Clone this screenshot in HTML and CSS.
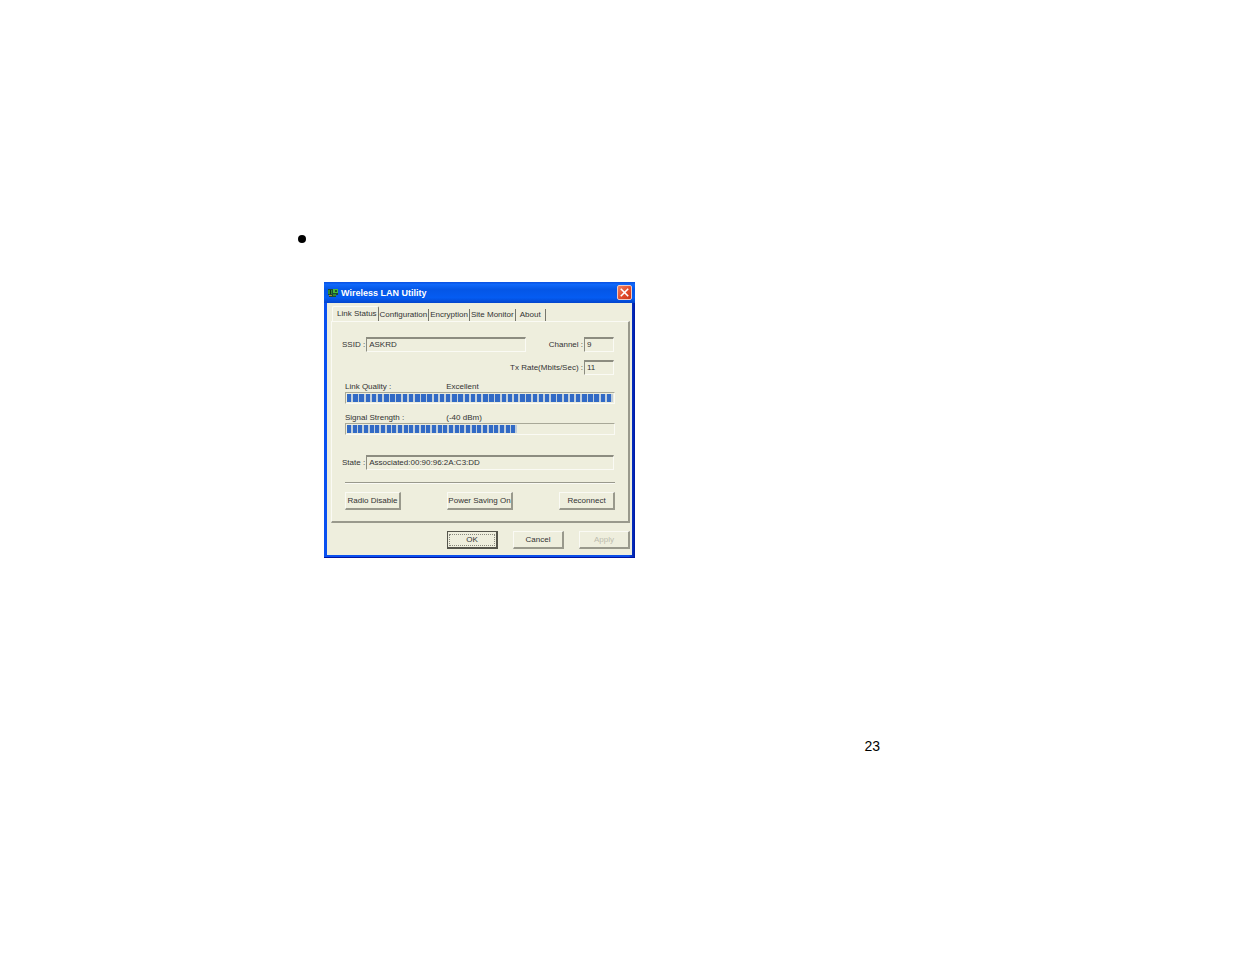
FILE: index.html
```html
<!DOCTYPE html>
<html lang="en">
<head>
<meta charset="utf-8">
<title>Wireless LAN Utility</title>
<link rel="stylesheet" href="styles.css">
</head>
<body>
<main class="page">
  <ul class="bullets"><li class="bullet"></li></ul>
  <section class="dialog" aria-label="Wireless LAN Utility">
    <header class="titlebar">
      <svg class="app-icon" viewBox="0 0 12 10" aria-hidden="true">
        <path d="M1 1h10v6H9v2H2V7H1z" fill="#1d4a34"/>
        <path d="M1 2h4v4H1z" fill="#2f8a35"/>
        <path d="M6 1h5v4H6z" fill="#46b83c"/>
        <path d="M3 2h1v4H3z" fill="#123020"/>
        <path d="M8 2h2v2H8z" fill="#1a5a2a"/>
        <path d="M2 7h3v1H2z" fill="#a8863c"/>
        <path d="M6 6h3v2H6z" fill="#2f8a35"/>
      </svg>
      <h1 class="title">Wireless LAN Utility</h1>
      <button class="close" aria-label="Close">
        <svg viewBox="0 0 14 14" aria-hidden="true"><path d="M3 3l8 8M11 3l-8 8" stroke="#fff" stroke-width="1.7" fill="none"/></svg>
      </button>
    </header>
    <div class="client">
      <nav class="tabs" role="tablist">
        <button class="tab active" role="tab" aria-selected="true">Link Status</button>
        <button class="tab" role="tab">Configuration</button>
        <button class="tab" role="tab">Encryption</button>
        <button class="tab" role="tab">Site Monitor</button>
        <button class="tab" role="tab">About</button>
      </nav>
      <div class="panel">
        <div class="row">
          <label class="lead" for="ssid">SSID :</label>
          <input class="field ssid" id="ssid" value="ASKRD" readonly>
          <label class="push" for="channel">Channel :</label>
          <input class="field short" id="channel" value="9" readonly>
        </div>
        <div class="row rate">
          <label class="push" for="rate">Tx Rate(Mbits/Sec) :</label>
          <input class="field short" id="rate" value="11" readonly>
        </div>
        <div class="meter">
          <div class="meter-head"><span>Link Quality :</span><span>Excellent</span></div>
          <div class="track" role="progressbar" aria-label="Link Quality" aria-valuenow="100"><div class="fill" style="width:100%;--blocks:43"></div></div>
        </div>
        <div class="meter">
          <div class="meter-head"><span>Signal Strength :</span><span>(-40 dBm)</span></div>
          <div class="track" role="progressbar" aria-label="Signal Strength" aria-valuenow="64"><div class="fill" style="width:64%;--blocks:30"></div></div>
        </div>
        <div class="row state">
          <label class="lead" for="state">State :</label>
          <input class="field wide" id="state" value="Associated:00:90:96:2A:C3:DD" readonly>
        </div>
        <hr class="rule">
        <div class="actions">
          <button class="btn">Radio Disable</button>
          <button class="btn large">Power Saving On</button>
          <button class="btn">Reconnect</button>
        </div>
      </div>
      <footer class="footer">
        <button class="btn default"><span class="focus">OK</span></button>
        <button class="btn">Cancel</button>
        <button class="btn" disabled>Apply</button>
      </footer>
    </div>
  </section>
  <p class="page-number">23</p>
</main>
</body>
</html>
```
FILE: styles.css
```css
* { box-sizing: border-box; }
body { margin: 0; background: #fff; color: #000; font-family: "Liberation Sans", Arial, sans-serif; }
.page { padding: 235px 355px 0 298px; }
.bullets { margin: 0; padding: 0; list-style: none; }
.bullet { width: 8px; height: 8px; border-radius: 50%; background: #000; }

.dialog {
  width: 53%;
  min-width: 311px;
  margin: 39px 0 0 26px;
  padding: 0 3px 2px;
  background: linear-gradient(90deg, #0a50f0, #0a4ee8 98%, #0018a0 100%);
  border-bottom: 1px solid #0014a0;
  font-size: 8px;
  line-height: 10px;
  color: #333;
}
.titlebar {
  display: flex;
  align-items: center;
  height: 21px;
  margin: 0 -3px;
  padding: 0 3px;
  background: linear-gradient(#0a50e0, #0f68fa 12%, #0556e6 35%, #055cf2 75%, #0345cc);
}
.app-icon { width: 12px; height: 10px; }
.title { flex: 1; margin: 0 0 0 2px; font-size: 9px; line-height: 12px; font-weight: bold; color: #fff; }
.close {
  width: 15px;
  height: 15px;
  padding: 0;
  border: 1px solid #f0c8c0;
  border-radius: 2px;
  background: linear-gradient(135deg, #f08060, #e04828 60%, #c83818);
}
.close svg { display: block; width: 13px; height: 13px; }

.client { padding: 3px 2px 6px 4px; background: #eeeedd; }
.tabs { display: flex; align-items: flex-end; height: 15px; padding-left: 1px; }
.tab {
  height: 12px;
  min-width: 30px;
  padding: 0 1px;
  border: 0;
  border-right: 1px solid #77776c;
  background: none;
  font: inherit;
  color: inherit;
  white-space: nowrap;
}
.tab.active {
  height: 15px;
  padding: 0 1px 1px 4px;
  border-top: 1px solid #fafaf4;
  border-left: 1px solid #fafaf4;
  border-radius: 2px 2px 0 0;
}
.panel {
  padding: 15px 13px 11px;
  border: 1px solid #fafaf4;
  border-right: 2px solid #99998c;
  border-bottom: 2px solid #99998c;
}
.row { display: flex; align-items: center; gap: 1px; margin: 0 1px 0 -3px; }
.rate { margin-top: 8px; }
.push { margin-left: auto; }
.lead { min-width: 23px; }
.field {
  height: 15px;
  min-width: 0;
  padding: 0 2px 2px;
  border: 1px solid #fafaf4;
  border-top: 2px solid #8c8c80;
  border-left: 1px solid #8c8c80;
  background: transparent;
  font: inherit;
  color: inherit;
}
.ssid { width: 160px; }
.short { width: 30px; }
.wide { flex: 1; }
.meter { margin-top: 7px; }
.meter + .meter { margin-top: 9px; }
.meter-head { display: grid; grid-template-columns: 3fr 5fr; }
.track {
  height: 12px;
  padding: 1px;
  border: 1px solid #fafaf4;
  border-top-color: #a8a898;
  border-left-color: #a8a898;
}
.fill {
  height: 8px;
  background: repeating-linear-gradient(90deg, #316ac5 0 calc(72% / var(--blocks)), #c0cedc 0 calc(100% / var(--blocks)));
}
.state { margin-top: 20px; }
.rule { height: 2px; margin: 12px 0 8px; border: 0; border-top: 1px solid #99998c; border-bottom: 1px solid #fafaf4; }
.actions { display: flex; justify-content: space-between; }
.btn {
  width: 56px;
  height: 18px;
  padding: 0;
  border: 1px solid #fafaf4;
  border-right: 2px solid #99998c;
  border-bottom: 2px solid #99998c;
  background: #eeeedd;
  font: inherit;
  color: inherit;
  white-space: nowrap;
}
.large { width: 66px; }
.footer { display: flex; justify-content: flex-end; gap: 15px; margin-top: 8px; }
.footer .btn { width: 51px; }
.footer .default { padding: 1px; border: 1px solid #55554c; border-right-width: 2px; border-bottom-width: 2px; }
.focus { display: block; border: 1px dotted #88887c; }
.btn:disabled { color: #bcbcae; }
.page-number { margin: 180px 0 0; font-size: 14px; line-height: 16px; text-align: right; }
```
